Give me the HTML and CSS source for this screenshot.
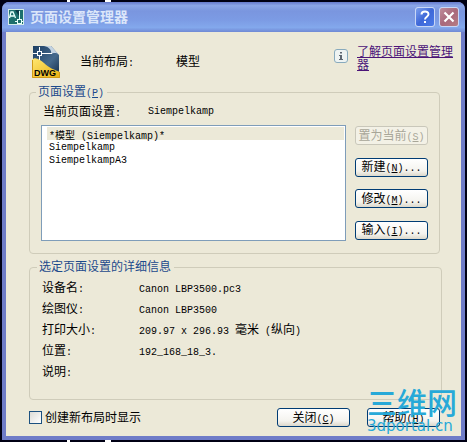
FILE: index.html
```html
<!DOCTYPE html>
<html lang="zh-cn">

<head>
    <meta charset="UTF-8">
    <meta name="viewport" content="width=device-width, initial-scale=1.0">
    <title>页面设置管理器</title>
    <link rel="stylesheet" href="styles.css">
</head>

<body>
    <main class="window">
        <header class="title-bar">
            <svg class="app-icon" width="16" height="16" viewBox="0 0 16 16">
                <rect x="0.5" y="0.5" width="15" height="15" fill="#1c6f6c" stroke="#d5ece8" />
                <path d="M7 1L11 7V1Z" fill="#0b3b46" />
                <path d="M1.5 9L3 3H5L7.5 9M2 7H6" fill="none" stroke="#e8fffa" stroke-width="1.3" />
                <path d="M11.5 2V15M7 12.5H15" stroke="#e8fffa" />
                <rect x="9.5" y="10.5" width="4" height="4" fill="#1c6f6c" stroke="#e8fffa" />
            </svg>
            <h1 class="title">页面设置管理器</h1>
            <button type="button" class="title-btn help" aria-label="帮助">
                <svg width="18" height="18" viewBox="0 0 18 18">
                    <path d="M5.5 6.5C5.5 2.5 12.5 2.5 12.5 6.3C12.5 8.6 9 8.8 9 11.5" fill="none" stroke="#fff" stroke-width="2" />
                    <rect x="8" y="13" width="2" height="2" fill="#fff" />
                </svg>
            </button>
            <button type="button" class="title-btn close" aria-label="关闭">
                <svg width="18" height="18" viewBox="0 0 18 18">
                    <path d="M4.5 4.5L13.5 13.5M13.5 4.5L4.5 13.5" stroke="#fff" stroke-width="2.2" />
                </svg>
            </button>
        </header>

        <div class="content">
            <div class="layout-info">
                <svg class="dwg-icon" width="28" height="32" viewBox="0 0 28 32">
                    <defs>
                        <linearGradient id="page" x1="0" y1="0" x2="1" y2="1">
                            <stop offset="0" stop-color="#1d3f63" />
                            <stop offset="0.6" stop-color="#45698c" />
                            <stop offset="1" stop-color="#17304c" />
                        </linearGradient>
                        <linearGradient id="gold" x1="0" y1="0" x2="1" y2="1">
                            <stop offset="0" stop-color="#ffe873" />
                            <stop offset="1" stop-color="#e9b010" />
                        </linearGradient>
                    </defs>
                    <path d="M1 0H19L27 9V29H1Z" fill="url(#page)" />
                    <path d="M12 0H19L27 9C25 6 21 7 19 8C20 4 17 1 12 0Z" fill="#c3d3e2" />
                    <path d="M0 14C3 10 8 14 12 17C17 22 23 24 28 26V32H0Z" fill="url(#gold)" />
                    <path d="M0.5 14V31.5H27.5V26" fill="none" stroke="#d09c18" />
                    <path d="M7.5 1V14M1 7.5H20" stroke="#fff" />
                    <rect x="5.5" y="5.5" width="4" height="4" fill="#2c5076" stroke="#fff" />
                    <text class="dwg-text" x="2" y="30">DWG</text>
                </svg>
                <span class="layout-label">当前布局<span class="en">:</span></span>
                <span class="layout-value">模型</span>
                <svg class="info-icon" width="14" height="14" viewBox="0 0 14 14">
                    <rect x="0.5" y="0.5" width="13" height="13" rx="2.5" fill="#eef3f2" stroke="#88aabd" />
                    <path d="M6 3H8V4.6H6ZM5 6H8V10H9V11H5V10H6V7H5Z" fill="#5d6670" />
                </svg>
                <a class="learn" href="#">了解页面设置管理器</a>
            </div>

            <fieldset class="group setup">
                <legend>页面设置<span class="en">(<u>P</u>)</span></legend>
                <div class="current">
                    <label for="setups">当前页面设置<span class="en">:</span></label>
                    <span class="en">Siempelkamp</span>
                </div>
                <div class="setup-body">
                    <select class="setup-list" id="setups" size="8">
                        <option class="picked">*模型 (Siempelkamp)*</option>
                        <option>Siempelkamp</option>
                        <option>SiempelkampA3</option>
                    </select>
                    <div class="btn-group">
                        <button type="button" class="btn" disabled>置为当前<span class="en">(<u>S</u>)</span></button>
                        <button type="button" class="btn">新建<span class="en">(<u>N</u>)...</span></button>
                        <button type="button" class="btn">修改<span class="en">(<u>M</u>)...</span></button>
                        <button type="button" class="btn">输入<span class="en">(<u>I</u>)...</span></button>
                    </div>
                </div>
            </fieldset>

            <fieldset class="group details">
                <legend>选定页面设置的详细信息</legend>
                <dl class="detail-list">
                    <dt>设备名<span class="en">:</span></dt>
                    <dd><span class="en">Canon LBP3500.pc3</span></dd>
                    <dt>绘图仪<span class="en">:</span></dt>
                    <dd><span class="en">Canon LBP3500</span></dd>
                    <dt>打印大小<span class="en">:</span></dt>
                    <dd><span class="en">209.97 x 296.93 </span>毫米<span class="en"> (</span>纵向<span class="en">)</span></dd>
                    <dt>位置<span class="en">:</span></dt>
                    <dd><span class="en">192_168_18_3.</span></dd>
                    <dt>说明<span class="en">:</span></dt>
                    <dd></dd>
                </dl>
            </fieldset>

            <footer class="footer">
                <label class="check"><input type="checkbox">创建新布局时显示</label>
                <button type="button" class="btn">关闭<span class="en">(<u>C</u>)</span></button>
                <button type="button" class="btn">帮助<span class="en">(<u>H</u>)</span></button>
            </footer>
        </div>
    </main>

    <div class="watermark">
        <div class="mark-name">三维网</div>
        <div class="mark-site">3dportal.cn</div>
    </div>
</body>

</html>
```

FILE: styles.css
```css
* {
    box-sizing: border-box;
}

body {
    position: relative;
    min-height: 100vh;
    margin: 0;
    padding: 2px;
    display: flex;
    background-color: #000014;
    background-image: linear-gradient(#fff, #fff), linear-gradient(#fff, #fff), linear-gradient(#fff, #fff), linear-gradient(#fff, #fff);
    background-size: 3px 2px, 6px 2px, 3px 2px, 6px 2px;
    background-position: 67px 0, 105px 0, 67px 100%, 105px 100%;
    background-repeat: no-repeat;
    color: #000;
    font-family: "Liberation Sans", "Noto Sans CJK SC", sans-serif;
    font-size: 12px;
    line-height: 14px;
}

.en {
    font-family: "Liberation Mono", monospace;
    font-size: 10px;
    line-height: 10px;
    white-space: pre;
}

.window {
    flex-grow: 1;
    display: flex;
    flex-direction: column;
    border: 4px solid #6f7cc8;
    border-top: 0;
    border-radius: 7px 7px 0 0;
    background-color: #ece9d8;
}

/* title bar */
.title-bar {
    height: 30px;
    margin: 0 -4px;
    padding: 0 6px;
    display: flex;
    align-items: center;
    gap: 4px;
    border-radius: 7px 7px 0 0;
    background-image: linear-gradient(#6579cc, #8ba6e8 12%, #7a96df 30%, #7c9be4 60%, #83a8ec 85%, #7089d4);
}

.title {
    flex-grow: 1;
    margin: 0 0 0 2px;
    color: #dbe6fa;
    font-size: 14px;
    font-weight: bold;
}

.title-btn {
    width: 20px;
    height: 20px;
    padding: 0;
    display: flex;
    align-items: center;
    justify-content: center;
    border: 1px solid #c9d7f6;
    border-radius: 3px;
}

.help {
    background-image: linear-gradient(135deg, #7da0ee, #3f68d8 50%, #4a7ae8);
}

.close {
    background-image: linear-gradient(135deg, #c08d9c, #a9697c 50%, #b67c84);
}

.content {
    flex-grow: 1;
    padding: 14px 20px 8px 23px;
}

.layout-info {
    height: 39px;
    display: flex;
    align-items: flex-start;
}

.layout-label {
    width: 96px;
    margin: 9px 0 0 20px;
}

.layout-value {
    flex-grow: 1;
    margin-top: 9px;
}

.dwg-icon {
    margin-left: 3px;
}

.dwg-text {
    font-family: "Liberation Sans", sans-serif;
    font-size: 9px;
    font-weight: bold;
}

.info-icon {
    margin: 3px 9px 0 0;
}

.learn {
    width: 98px;
    margin-right: -14px;
    color: #4b1478;
    line-height: 13px;
}

/* group boxes */
.group {
    min-width: 0;
    margin: 0;
    padding: 0 12px;
    border: 1px solid #cfccba;
    border-radius: 4px;
}

.group legend {
    margin-left: -5px;
    padding: 0 3px 0 2px;
    color: #1c4a8c;
}

.setup {
    margin-right: 1px;
    padding: 6px 11px 12px;
}

.current {
    padding-left: 2px;
    display: flex;
    align-items: center;
}

.current label {
    width: 105px;
}

.setup-body {
    margin-top: 6px;
    display: flex;
    gap: 9px;
}

.setup-list {
    flex-grow: 1;
    height: 116px;
    padding: 1px;
    border: 1px solid #7f9db9;
    border-radius: 0;
    outline: none;
    overflow: hidden;
    background-color: #fff;
    color: #000;
    font-family: "Liberation Mono", "Noto Sans CJK SC", monospace;
    font-size: 10px;
}

.setup-list option {
    height: 13px;
    min-height: 0;
    margin-left: 4px;
    padding: 2px 2px 0;
}

.setup-list .picked {
    padding-top: 0;
    background-color: #ece9d8;
}

.btn-group {
    padding: 1px 0;
    display: flex;
    flex-direction: column;
    justify-content: space-between;
}

.btn {
    width: 73px;
    height: 19px;
    padding: 0;
    border: 1px solid #003c74;
    border-radius: 3px;
    background-image: linear-gradient(#fff, #f4f3ee 70%, #dcd8cb);
    color: #000;
    font-family: inherit;
    font-size: 12px;
    line-height: 14px;
    white-space: nowrap;
}

.btn:disabled {
    border-color: #c9c7ba;
    background: #f3f1e6;
    color: #a8a698;
}

/* selected page setup */
.details {
    margin: 6px -1px 0 0;
    padding: 3px 12px 17px;
}

.detail-list {
    margin: 0;
    display: grid;
    grid-template-columns: 97px 1fr;
    grid-auto-rows: 21px;
    align-items: center;
}

.detail-list dd {
    margin: 0;
}

.footer {
    margin-top: 8px;
    padding-right: 1px;
    display: flex;
    align-items: center;
    gap: 17px;
}

.check {
    flex-grow: 1;
    display: flex;
    align-items: center;
    gap: 3px;
}

.check input {
    appearance: none;
    width: 13px;
    height: 13px;
    margin: 0;
    border: 1px solid #1c5180;
    background-image: linear-gradient(135deg, #dcdcd7, #fff);
}

/* site mark over the corner */
.watermark {
    position: absolute;
    right: 10px;
    bottom: 8px;
    color: #27a9d8;
    pointer-events: none;
}

.mark-name {
    font-size: 30px;
    font-weight: 500;
    line-height: 30px;
}

.mark-site {
    font-family: "DejaVu Sans", sans-serif;
    font-size: 15px;
    line-height: 15px;
}
```
